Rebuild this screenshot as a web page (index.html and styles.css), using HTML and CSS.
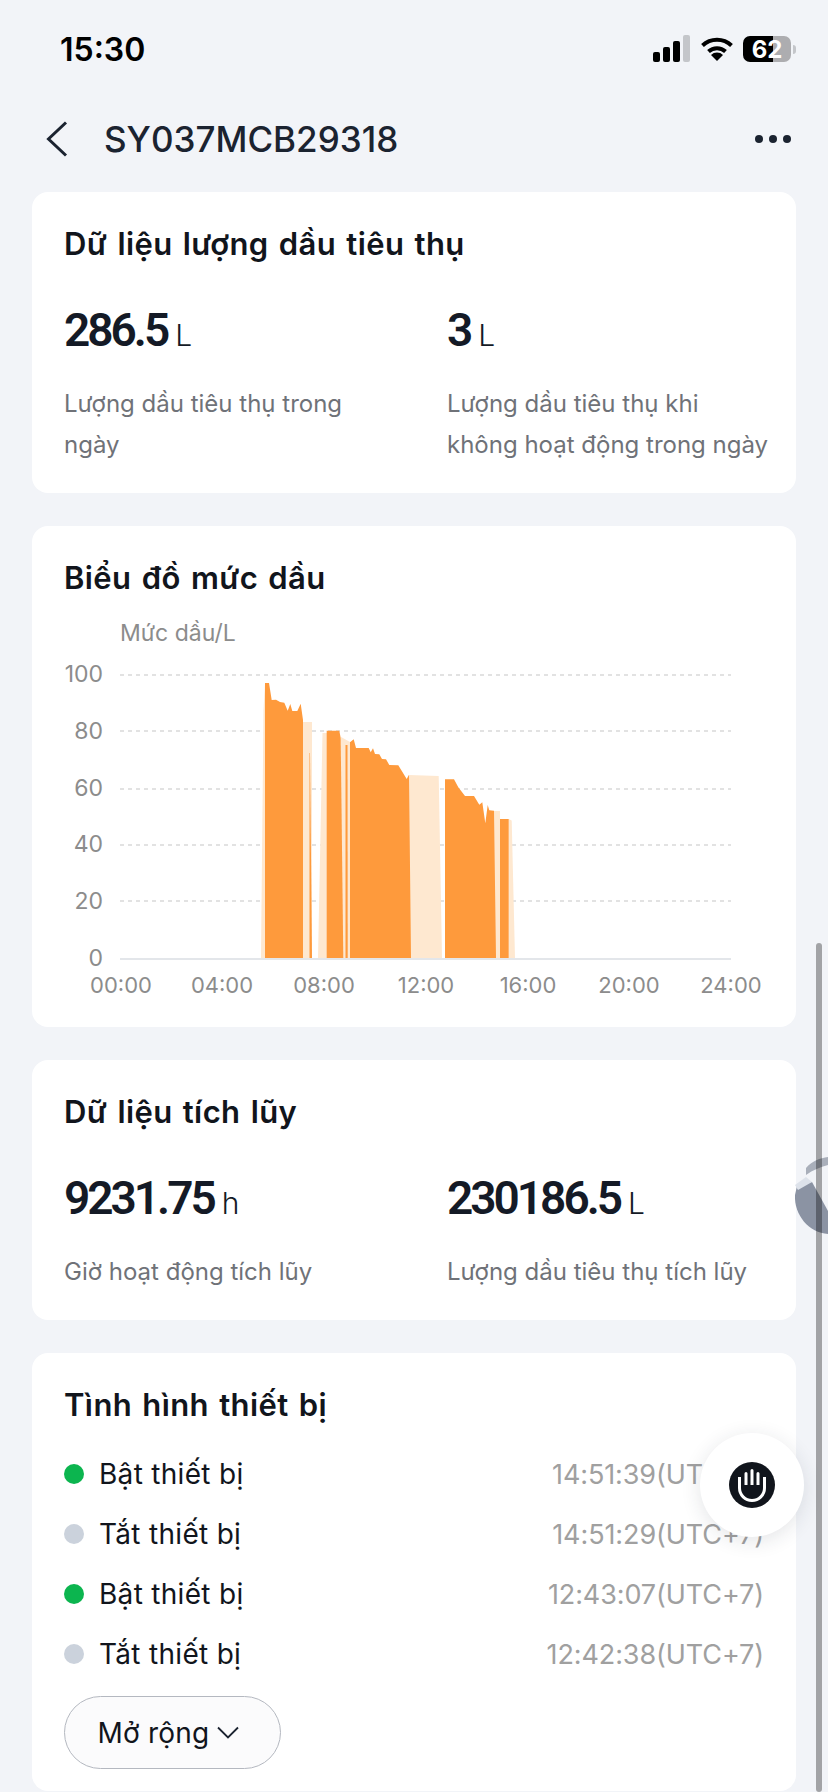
FILE: index.html

```html
<!DOCTYPE html>
<html lang="vi">
<head>
  <meta charset="UTF-8">
  <meta name="viewport" content="width=device-width, initial-scale=1.0">
  <title>SY037MCB29318</title>
  <link rel="stylesheet" href="styles.css">
</head>
<body>
  <div class="status-bar">
    <span class="clock">15:30</span>
    <div class="status-icons">
      <svg class="signal" width="38" height="28" viewBox="0 0 38 28">
        <rect x="0" y="17" width="7" height="10" rx="2" fill="#000"/>
        <rect x="10" y="12" width="7" height="15" rx="2" fill="#000"/>
        <rect x="20" y="6" width="7" height="21" rx="2" fill="#000"/>
        <rect x="30" y="0" width="7" height="27" rx="2" fill="#c4c6ca"/>
      </svg>
      <svg class="wifi" width="32" height="24" viewBox="0 0 32 24">
        <path d="M1.5 8.5a21 21 0 0 1 29 0" fill="none" stroke="#000" stroke-width="4"/>
        <path d="M7.5 14.5a12.5 12.5 0 0 1 17 0" fill="none" stroke="#000" stroke-width="4"/>
        <path d="M16 24l-6-6a8.500 8.500 0 0 1 12 0z" fill="#000"/>
      </svg>
      <div class="battery">
        <div class="battery-body"><span class="battery-level">62</span></div>
        <span class="battery-tip"></span>
      </div>
    </div>
  </div>

  <header class="nav">
    <svg class="back" width="22" height="36" viewBox="0 0 22 36">
      <path d="M20 1.500L2.500 18 20 34.500" fill="none" stroke="#1b2330" stroke-width="3"/>
    </svg>
    <h1>SY037MCB29318</h1>
    <div class="more"><i></i><i></i><i></i></div>
  </header>

  <main>
    <section class="card">
      <h2>Dữ liệu lượng dầu tiêu thụ</h2>
      <div class="stats">
        <div class="stat">
          <div class="value">286.5<small>L</small></div>
          <p>Lượng dầu tiêu thụ trong<br>ngày</p>
        </div>
        <div class="stat">
          <div class="value">3<small>L</small></div>
          <p>Lượng dầu tiêu thụ khi<br>không hoạt động trong ngày</p>
        </div>
      </div>
    </section>

    <section class="card chart-card">
      <h2>Biểu đồ mức dầu</h2>
      <svg class="chart" width="764" height="400" viewBox="32 590 764 400">
        <text class="lbl unit" x="120" y="641">Mức dầu/L</text>

        <g class="grid">
          <line x1="120" x2="731" y1="675" y2="675"/>
          <line x1="120" x2="731" y1="731" y2="731"/>
          <line x1="120" x2="731" y1="789" y2="789"/>
          <line x1="120" x2="731" y1="845" y2="845"/>
          <line x1="120" x2="731" y1="901" y2="901"/>
        </g>
        <line class="base" x1="120" x2="731" y1="959" y2="959"/>

        <g class="lbl y-lbl">
          <text x="103" y="682">100</text>
          <text x="103" y="739">80</text>
          <text x="103" y="796">60</text>
          <text x="103" y="852">40</text>
          <text x="103" y="909">20</text>
          <text x="103" y="966">0</text>
        </g>
        <g class="lbl x-lbl">
          <text x="121" y="993">00:00</text>
          <text x="222" y="993">04:00</text>
          <text x="324" y="993">08:00</text>
          <text x="426" y="993">12:00</text>
          <text x="528" y="993">16:00</text>
          <text x="629" y="993">20:00</text>
          <text x="731" y="993">24:00</text>
        </g>

        <!-- idle stretches -->
        <g class="idle">
          <polygon points="261,958 263.500,710 265,683 265,958"/>
          <polygon points="303,722 312,722 312,958 303,958"/>
          <polygon points="318,958 322.500,733 327,733 327,958"/>
          <polygon points="341,737 350,742 350,958 341,958"/>
          <polygon points="409,958 409,775 438.700,776 442,958"/>
          <polygon points="494,811 500,811 500,958 494,958"/>
          <polygon points="508.700,819 511.700,820.500 515,958 508.700,958"/>
        </g>
        <!-- running stretches -->
        <g class="run">
          <polygon points="265,683 269,683 271.700,700 276,699.700 280,702 284.300,702.700 287.700,710.700 290.300,704 292.300,711 297.300,711 300.700,703.700 303,720 303,958 265,958"/>
          <polygon points="309.500,753 310,753 312,958 309.500,958"/>
          <polygon points="326.700,730.700 339.300,730.700 340.700,738 343.300,958 326.700,958"/>
          <polygon points="345.500,745 347.500,745 347.700,958 345.500,958"/>
          <polygon points="350,742.300 353.700,739.300 356,748 368.700,748 370.700,752.300 373,748.300 375,754 379.300,754.300 382,759 386,759.300 389.300,765 398.300,765.300 406.700,779 409,774.700 411,958 350,958"/>
          <polygon points="445,779.300 454,779.300 458.300,787.300 465,796 474,796 479.300,804.700 482.300,802.300 485.300,823.300 487.700,805 489.300,810.300 494,810.700 496,958 445,958"/>
          <polygon points="500,819 508.700,819 508.700,958 500,958"/>
        </g>
      </svg>
    </section>

    <section class="card totals">
      <h2>Dữ liệu tích lũy</h2>
      <div class="stats">
        <div class="stat">
          <div class="value">9231.75<small>h</small></div>
          <p>Giờ hoạt động tích lũy</p>
        </div>
        <div class="stat">
          <div class="value">230186.5<small>L</small></div>
          <p>Lượng dầu tiêu thụ tích lũy</p>
        </div>
      </div>
    </section>

    <section class="card events">
      <h2>Tình hình thiết bị</h2>
      <ul class="event-list">
        <li><span class="dot on"></span><span class="event-name">Bật thiết bị</span><time>14:51:39(UTC+7)</time></li>
        <li><span class="dot"></span><span class="event-name">Tắt thiết bị</span><time>14:51:29(UTC+7)</time></li>
        <li><span class="dot on"></span><span class="event-name">Bật thiết bị</span><time>12:43:07(UTC+7)</time></li>
        <li><span class="dot"></span><span class="event-name">Tắt thiết bị</span><time>12:42:38(UTC+7)</time></li>
      </ul>
      <button class="expand">Mở rộng
        <svg width="22" height="13" viewBox="0 0 22 13"><path d="M1 1.500l10 10 10-10" fill="none" stroke="#1b2330" stroke-width="1.800"/></svg>
      </button>
    </section>
  </main>

  <svg class="badge" width="35" height="84" viewBox="0 0 35 84">
    <path d="M13 15C19 8 27 5 35 4v8C27 14 20 17 13 22z" fill="#a9afba"/>
    <path d="M4 33L19 29 35 58v23C16 80 1 62 2 42z" fill="#8b93a3"/>
    <path d="M2 32L13 24 19 29 5 37z" fill="#dde2ea"/>
  </svg>

  <div class="scrollbar"></div>

  <div class="fab">
    <svg width="46" height="46" viewBox="0 0 46 46">
      <circle cx="23" cy="23" r="23" fill="#11151c"/>
      <path d="M10.500 15v11a12.500 12.500 0 0 0 25 0V15" fill="none" stroke="#fff" stroke-width="3"/>
      <path d="M15.500 11.500a1.500 1.500 0 0 1 3 0V23h-3zM21.500 8.500a1.500 1.500 0 0 1 3 0V23h-3zM27.500 11.500a1.500 1.500 0 0 1 3 0V23h-3z" fill="#fff"/>
    </svg>
  </div>
</body>
</html>
```

FILE: styles.css

```css
body {
  margin: 0;
  background: #f2f4f8;
  font-family: Inter, "Noto Sans", sans-serif;
  color: #11151c;
  height: 1792px;
  overflow: hidden;
  position: relative;
}
.status-bar {
  height: 98px;
  padding: 0 32px 0 60px;
  display: flex;
  align-items: center;
  justify-content: space-between;
  box-sizing: border-box;
}
.clock {
  font-size: 32px;
  font-weight: 600;
  color: #000;
}
.status-icons {
  display: flex;
  align-items: center;
  gap: 10px;
}
.battery {
  display: flex;
  align-items: center;
  gap: 2px;
}
.battery-body {
  width: 48px;
  height: 26px;
  border-radius: 7px;
  background: linear-gradient(90deg, #000 62%, #adadb0 62%);
  display: flex;
  align-items: center;
  justify-content: center;
}
.battery-level {
  color: #fff;
  font-size: 24px;
  font-weight: 700;
}
.battery-tip {
  width: 3px;
  height: 9px;
  background: #c4c6ca;
  border-radius: 0 3px 3px 0;
}
.nav {
  height: 82px;
  padding: 0 37px 0 46px;
  display: flex;
  align-items: center;
  box-sizing: border-box;
  margin-bottom: 12px;
}
.nav h1 {
  margin: 0 0 0 36px;
  font-size: 35px;
  font-weight: 500;
  color: #1b2330;
  flex: 1;
}
.more {
  display: flex;
  gap: 6px;
}
.more i {
  width: 8px;
  height: 8px;
  border-radius: 50%;
  background: #1b2330;
}
main {
  margin: 0 32px;
  display: flex;
  flex-direction: column;
  gap: 33px;
}
.card {
  background: #fff;
  border-radius: 16px;
  padding: 34px 32px 0;
  box-sizing: border-box;
}
.card h2 {
  margin: 0;
  font-size: 31px;
  font-weight: 600;
  line-height: 36px;
  letter-spacing: 0.4px;
  word-spacing: 2px;
  color: #11151c;
}
.stats {
  display: flex;
  margin-top: 44px;
}
.stat {
  flex: 0 0 383px;
}
.stat + .stat {
  flex: 1;
}
.value {
  font-family: Roboto, sans-serif;
  font-size: 46px;
  font-weight: 600;
  line-height: 48px;
  letter-spacing: -3px;
  color: #141a26;
}
.value small {
  font-family: Inter, sans-serif;
  font-size: 30px;
  font-weight: 300;
  letter-spacing: 0;
  margin-left: 8px;
}
.stat p {
  margin: 24px 0 0;
  font-size: 24px;
  line-height: 41px;
  white-space: nowrap;
  color: #6f7278;
}
.card:first-child {
  height: 301px;
}
.chart-card {
  height: 501px;
  position: relative;
}
.chart {
  position: absolute;
  left: 0;
  top: 64px;
  overflow: visible;
}
.lbl {
  font-size: 22px;
  fill: #8c8c8c;
}
.unit {
  font-size: 23px;
}
.y-lbl text {
  text-anchor: end;
  font-size: 23px;
}
.x-lbl text {
  text-anchor: middle;
}
.grid line {
  stroke: #d9d9d9;
  stroke-width: 1.5;
  stroke-dasharray: 4 4;
}
.base {
  stroke: #e3e6ea;
  stroke-width: 2;
}
.idle polygon {
  fill: #fee8d0;
}
.run polygon {
  fill: #fe9a3c;
}
.totals {
  height: 260px;
}
.events {
  height: 438px;
}
.event-list {
  list-style: none;
  margin: 21px 0 0;
  padding: 0;
}
.event-list li {
  height: 60px;
  display: flex;
  align-items: center;
  font-size: 27px;
}
.dot {
  width: 20px;
  height: 20px;
  border-radius: 50%;
  background: #cbd2dc;
  margin-right: 15px;
}
.dot.on {
  background: #0cb54f;
}
.event-name {
  flex: 1;
  font-size: 28px;
  letter-spacing: 0.3px;
}
.event-list time {
  color: #a0a0a0;
  letter-spacing: -0.1px;
}
.expand {
  margin-top: 12px;
  padding: 0 8px 0 0;
  width: 217px;
  height: 73px;
  border: 1px solid #b4b8c0;
  border-radius: 37px;
  background: #fbfbfc;
  font: 28px Inter, sans-serif;
  letter-spacing: 0.2px;
  color: #11151c;
  display: flex;
  align-items: center;
  justify-content: center;
  gap: 8px;
}
.scrollbar {
  position: absolute;
  left: 816px;
  top: 943px;
  width: 6px;
  bottom: 0;
  background: rgba(0, 0, 0, 0.33);
  border-radius: 3px;
}
.badge {
  position: absolute;
  left: 793px;
  top: 1153px;
}
.fab {
  position: absolute;
  left: 700px;
  top: 1433px;
  width: 104px;
  height: 104px;
  border-radius: 50%;
  background: #fff;
  box-shadow: 0 4px 20px rgba(30, 40, 60, 0.12);
  display: flex;
  align-items: center;
  justify-content: center;
}
```
